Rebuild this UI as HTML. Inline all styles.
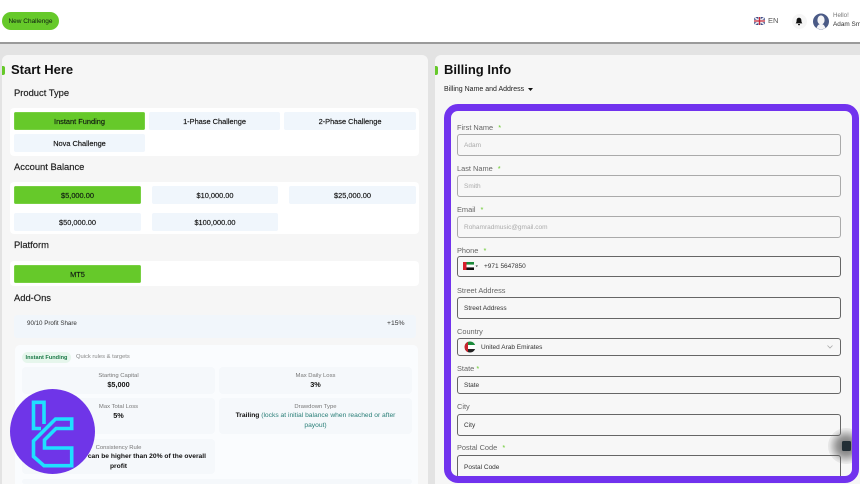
<!DOCTYPE html>
<html>
<head>
<meta charset="utf-8">
<style>
html,body{margin:0;padding:0;width:860px;height:484px;overflow:hidden;background:#e3e3e3}
body{position:relative;font-family:"Liberation Sans",sans-serif;color:#111;filter:blur(.3px)}
div,span{position:absolute;box-sizing:border-box;white-space:nowrap}
.c{display:flex;align-items:center;justify-content:center}
.btn{height:18px;border-radius:2px;background:#f0f6fc;font-size:7.4px;color:#111;display:flex;align-items:center;justify-content:center;-webkit-text-stroke:.15px #111}
.on{background:#66c92a;color:#0c1a10;box-shadow:inset 0 0 0 .5px #8ad75a}
.card{background:#fff;border-radius:4px;left:10px;width:409px}
.h{font-size:9.4px;color:#1a1a1a;left:14px;line-height:12px;-webkit-text-stroke:.15px #1a1a1a}
.tile{background:#f5f8fb;border-radius:4px;text-align:center;white-space:normal}
.tl{left:0;right:0;font-size:5.9px;color:#777;text-align:center;top:5px;line-height:8px}
.tv{left:2px;right:2px;font-size:6.7px;font-weight:bold;color:#111;text-align:center;top:13px;line-height:9.5px}
.lab{font-size:7.4px;color:#666;line-height:10px}
.lab i{font-style:normal;color:#66c92a;margin-left:3px}
.in{width:384px;background:#f7f7f7;border-radius:3px;font-size:6.5px;padding-left:6px;display:flex;align-items:center}
.ph{border:1px solid #aaa;color:#aaa}
.da{border:1px solid #666;color:#333}
</style>
</head>
<body>
<div style="left:0;top:0;width:860px;height:42px;background:#fff"></div>
<div style="left:0;top:42px;width:860px;height:2px;background:#9a9a9a"></div>
<div class="c" style="left:2px;top:12px;width:57px;height:18px;border-radius:9px;background:#66c92a;font-size:6.5px;color:#0c1a10">New Challenge</div>

<svg style="position:absolute;left:754px;top:17px" width="11" height="8" viewBox="0 0 11 8"><rect width="11" height="8" rx="1" fill="#3a4a86"/><path d="M0 0L11 8M11 0L0 8" stroke="#e8e8f0" stroke-width="1.6"/><path d="M5.5 0V8M0 4H11" stroke="#eee" stroke-width="2.4"/><path d="M5.5 0V8M0 4H11" stroke="#c8283c" stroke-width="1.3"/></svg>
<span style="left:768px;top:16px;font-size:7.5px;line-height:10px;color:#555">EN</span>
<div style="left:792px;top:14px;width:15px;height:15px;border-radius:50%;background:#f6f6f6"></div>
<svg style="position:absolute;left:795px;top:17px" width="8" height="9" viewBox="0 0 8 9"><path d="M4 .8C2.3.8 1.6 2 1.6 3.6C1.6 5.2 1 5.8.6 6.4H7.4C7 5.8 6.4 5.2 6.4 3.6C6.4 2 5.7.8 4 .8Z" fill="#111"/><rect x="3" y="7" width="2" height="1.2" rx=".6" fill="#111"/></svg>
<svg style="position:absolute;left:813px;top:13px" width="16" height="17" viewBox="0 0 16 17"><circle cx="8" cy="8.5" r="8" fill="#4a5a86"/><ellipse cx="8" cy="7" rx="3.6" ry="4.6" fill="#f4f4f6"/><path d="M3.6 15C4.6 12 6 11 8 11C10 11 11.4 12 12.4 15C10 16.6 6 16.6 3.6 15Z" fill="#f4f4f6"/></svg>
<span style="left:833px;top:12px;font-size:6.2px;line-height:8px;color:#777">Hello!</span>
<span style="left:833px;top:21px;font-size:6.4px;line-height:8px;color:#333;width:27px;overflow:hidden">Adam Smith</span>

<!-- left panel -->
<div style="left:2px;top:55px;width:426px;height:429px;background:#f6f6f6;border-radius:6px 6px 0 0"></div>
<div style="left:2px;top:66px;width:3px;height:9px;background:#66c92a;border-radius:0 2px 2px 0"></div>
<span style="left:11px;top:62px;font-size:13px;font-weight:bold;line-height:16px;color:#111">Start Here</span>
<div class="h" style="top:87px">Product Type</div>
<div class="card" style="top:108px;height:48px"></div>
<div class="btn on" style="left:14px;top:112px;width:131px">Instant Funding</div>
<div class="btn" style="left:149px;top:112px;width:131px">1-Phase Challenge</div>
<div class="btn" style="left:284px;top:112px;width:132px">2-Phase Challenge</div>
<div class="btn" style="left:14px;top:134px;width:131px">Nova Challenge</div>

<div class="h" style="top:161px">Account Balance</div>
<div class="card" style="top:182px;height:52px"></div>
<div class="btn on" style="left:14px;top:186px;width:127px">$5,000.00</div>
<div class="btn" style="left:152px;top:186px;width:126px">$10,000.00</div>
<div class="btn" style="left:289px;top:186px;width:127px">$25,000.00</div>
<div class="btn" style="left:14px;top:213px;width:127px">$50,000.00</div>
<div class="btn" style="left:152px;top:213px;width:126px">$100,000.00</div>

<div class="h" style="top:239px">Platform</div>
<div class="card" style="top:261px;height:25px"></div>
<div class="btn on" style="left:14px;top:265px;width:127px">MT5</div>

<div class="h" style="top:292px">Add-Ons</div>
<div style="left:14px;top:315px;width:402px;height:23px;background:#f1f6fb;border-radius:3px"></div>
<span style="left:27px;top:320px;font-size:6.2px;line-height:8px;color:#333">90/10 Profit Share</span>
<span style="left:387px;top:320px;font-size:6.8px;line-height:8px;color:#333">+15%</span>

<div style="left:15px;top:345px;width:403px;height:139px;background:#fafcfe;border-radius:5px 5px 0 0"></div>
<div class="c" style="left:22px;top:352px;width:49px;height:11px;border-radius:6px;background:#e6f6ec;color:#1c7a48;font-size:5.6px;font-weight:bold">Instant Funding</div>
<span style="left:76px;top:353px;font-size:5.8px;line-height:8px;color:#888">Quick rules &amp; targets</span>

<div class="tile" style="left:22px;top:367px;width:193px;height:27px"><div class="tl">Starting Capital</div><div class="tv" style="font-size:7.3px">$5,000</div></div>
<div class="tile" style="left:219px;top:367px;width:193px;height:27px"><div class="tl">Max Daily Loss</div><div class="tv" style="font-size:7.3px">3%</div></div>
<div class="tile" style="left:22px;top:398px;width:193px;height:36px"><div class="tl">Max Total Loss</div><div class="tv" style="font-size:7.3px">5%</div></div>
<div class="tile" style="left:219px;top:398px;width:193px;height:36px"><div class="tl">Drawdown Type</div><div class="tv">Trailing <b style="font-weight:normal;color:#2a7f78">(locks at initial balance when reached or after<br>payout)</b></div></div>
<div class="tile" style="left:22px;top:439px;width:193px;height:35px"><div class="tl">Consistency Rule</div><div class="tv" style="left:auto;right:9px;text-align:right">No single day can be higher than 20% of the overall</div><div class="tv" style="top:22.500px">profit</div></div>
<div class="tile" style="left:22px;top:479px;width:390px;height:5px"></div>

<!-- logo -->
<svg style="position:absolute;left:10px;top:389px" width="85" height="85" viewBox="10 389 85 85">
<circle cx="52.5" cy="431.5" r="42.5" fill="#6f35e8"/>
<g fill="none" stroke="#1fe0ff" stroke-width="3.6" stroke-linejoin="miter">
<path d="M41 428.500H33.500V402.300H44V424"/>
<path d="M33.500 441L55.500 419H71.700V428.500H56L44.500 440V448H71.700V465.700H44L33.500 456.500Z"/>
</g>
</svg>

<!-- right panel -->
<div style="left:435px;top:55px;width:425px;height:429px;background:#f6f6f6;border-radius:6px 0 0 0"></div>
<div style="left:435px;top:66px;width:3px;height:9px;background:#66c92a;border-radius:0 2px 2px 0"></div>
<span style="left:444px;top:62px;font-size:13px;font-weight:bold;line-height:16px;color:#111">Billing Info</span>
<span style="left:444px;top:85px;font-size:7px;line-height:9px;color:#222">Billing Name and Address</span>
<svg style="position:absolute;left:528px;top:87.500px" width="5" height="3"><path d="M0 0H5L2.500 3Z" fill="#111"/></svg>

<div style="left:444px;top:104px;width:415px;height:379px;border:7px solid #7132ee;border-radius:14px;background:#f7f7f7;overflow:hidden">
<div class="lab" style="left:6px;top:12px">First Name <i>*</i></div>
<div class="in ph" style="left:6px;top:23px;height:22px">Adam</div>
<div class="lab" style="left:6px;top:53px">Last Name <i>*</i></div>
<div class="in ph" style="left:6px;top:64px;height:22px">Smith</div>
<div class="lab" style="left:6px;top:94px">Email <i>*</i></div>
<div class="in ph" style="left:6px;top:105px;height:22px">Rohamradmusic@gmail.com</div>
<div class="lab" style="left:6px;top:135px">Phone <i>*</i></div>
<div class="in da" style="left:6px;top:145px;height:21px;padding-left:26px">+971 5647850</div>
<svg style="position:absolute;left:12px;top:150px" width="15" height="10" viewBox="0 0 15 10"><rect width="11" height="8" y="1" fill="#fff"/><rect x="3" y="1" width="8" height="2.600" fill="#1b8a3a"/><rect x="3" y="6.400" width="8" height="2.600" fill="#111"/><rect y="1" width="3.500" height="8" fill="#d81e2c"/><path d="M12.500 4.500H15L13.750 6Z" fill="#333"/></svg>
<div class="lab" style="left:6px;top:175px">Street Address</div>
<div class="in da" style="left:6px;top:186px;height:22px">Street Address</div>
<div class="lab" style="left:6px;top:216px">Country</div>
<div class="in da" style="left:6px;top:227px;height:18px;padding-left:23px">United Arab Emirates</div>
<svg style="position:absolute;left:13px;top:230px" width="12" height="12" viewBox="0 0 12 12"><defs><clipPath id="cf"><circle cx="6" cy="6" r="5.500"/></clipPath></defs><g clip-path="url(#cf)"><rect width="12" height="4" fill="#1b8a3a"/><rect y="4" width="12" height="4" fill="#fff"/><rect y="8" width="12" height="4" fill="#222"/><rect width="4" height="12" fill="#c8242e"/></g></svg>
<svg style="position:absolute;left:376px;top:234px" width="6" height="4"><path d="M.5 .5L3 3L5.500 .5" fill="none" stroke="#aaa" stroke-width=".8"/></svg>
<div class="lab" style="left:6px;top:253px">State <i style="margin-left:0">*</i></div>
<div class="in da" style="left:6px;top:265px;height:18px">State</div>
<div class="lab" style="left:6px;top:291px">City</div>
<div class="in da" style="left:6px;top:303px;height:22px">City</div>
<div class="lab" style="left:6px;top:332px">Postal Code <i>*</i></div>
<div class="in da" style="left:6px;top:344px;height:24px">Postal Code</div>
<!-- chat -->
<div style="left:377px;top:317px;width:36px;height:36px;border-radius:50%;background:radial-gradient(circle,rgba(70,70,70,.8) 0,rgba(80,80,80,.55) 35%,rgba(120,120,120,.15) 65%,rgba(150,150,150,0) 100%)"></div>
<div style="left:391px;top:330px;width:9px;height:10px;background:#222e35;border-radius:1.500px"></div>
</div>
</body>
</html>
